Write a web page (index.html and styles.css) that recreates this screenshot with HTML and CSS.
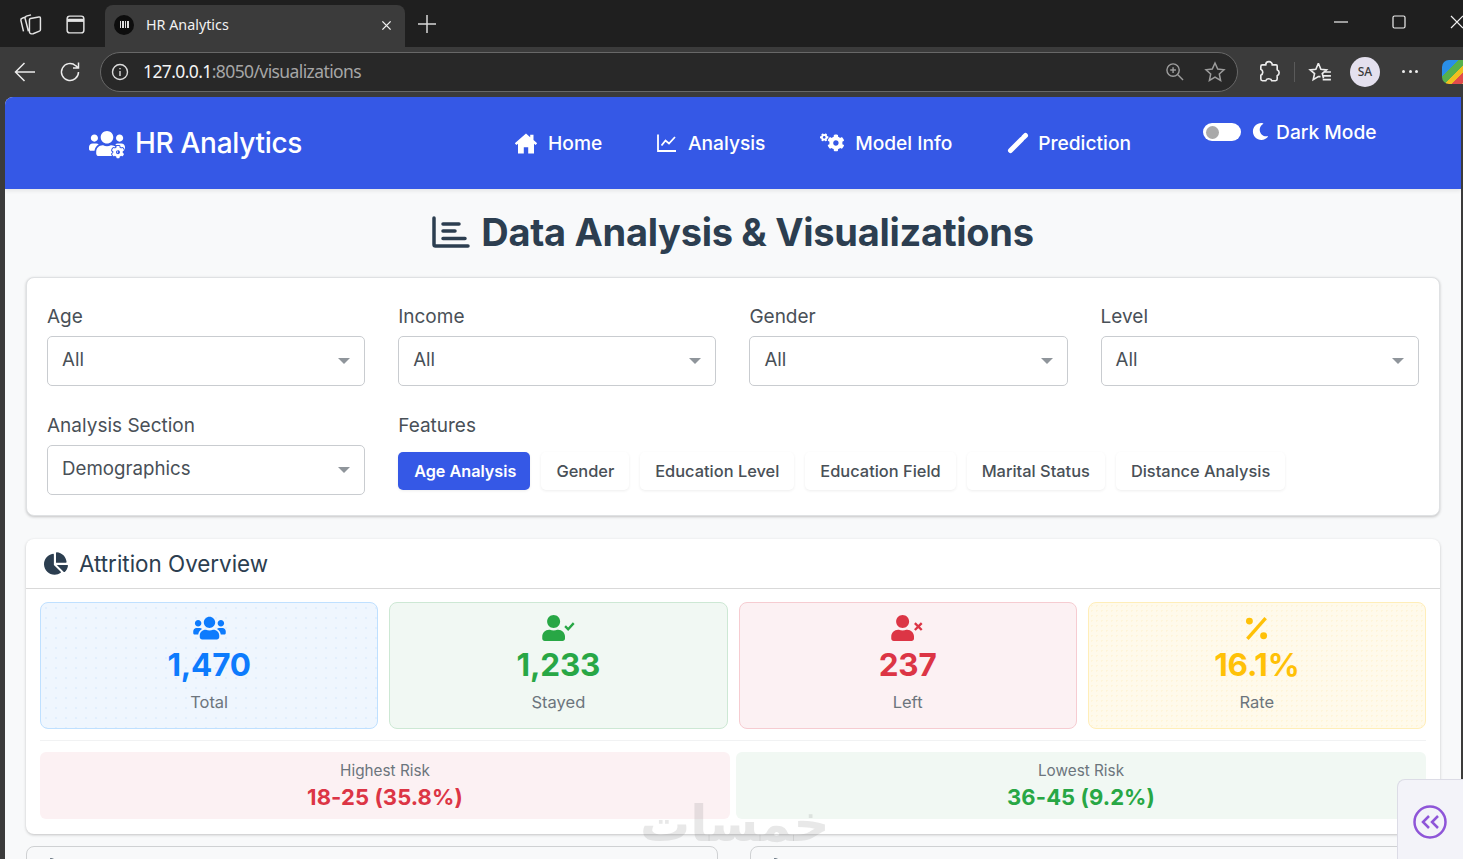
FILE: index.html
```html
<!DOCTYPE html>
<html lang="en">
<head>
<meta charset="utf-8">
<title>HR Analytics</title>
<link rel="stylesheet" href="styles.css">
</head>
<body>
<svg class="defs" width="0" height="0">
  <defs>
    <path id="p-user" d="M224 256c70.700 0 128-57.300 128-128S294.700 0 224 0 96 57.300 96 128s57.300 128 128 128zm89.600 32h-16.700c-22.200 10.200-46.900 16-72.900 16s-50.600-5.800-72.900-16h-16.700C60.200 288 0 348.200 0 422.400V464c0 26.500 21.500 48 48 48h352c26.500 0 48-21.500 48-48v-41.600c0-74.200-60.200-134.400-134.400-134.400z"/>
    <path id="p-users" d="M96 224c35.300 0 64-28.700 64-64s-28.700-64-64-64-64 28.700-64 64 28.700 64 64 64zm448 0c35.300 0 64-28.700 64-64s-28.700-64-64-64-64 28.700-64 64 28.700 64 64 64zm32 32h-64c-17.600 0-33.500 7.100-45.100 18.600 40.300 22.100 68.900 62 75.100 109.400h66c17.700 0 32-14.300 32-32v-32c0-35.300-28.700-64-64-64zm-256 0c61.900 0 112-50.100 112-112S381.900 32 320 32 208 82.100 208 144s50.100 112 112 112zm76.800 32h-8.300c-20.800 10-43.900 16-68.500 16s-47.600-6-68.500-16h-8.300C179.600 288 128 339.600 128 403.200V432c0 26.500 21.500 48 48 48h288c26.500 0 48-21.500 48-48v-28.800c0-63.600-51.600-115.200-115.200-115.200zm-223.700-13.400C161.500 263.100 145.600 256 128 256H64c-35.300 0-64 28.700-64 64v32c0 17.700 14.300 32 32 32h65.900c6.300-47.400 34.900-87.300 75.200-109.400z"/>
    <path id="p-pie" d="M527.790 288H290.500l158.030 158.030c6.040 6.040 15.980 6.530 22.190.68 38.700-36.460 65.320-85.610 73.130-140.860 1.340-9.460-6.510-17.850-16.060-17.850zm-15.830-64.800C503.720 103.740 408.260 8.280 288.800.04 279.680-.59 272 7.100 272 16.240V240h223.770c9.140 0 16.820-7.680 16.190-16.800zM224 288V50.710c0-9.550-8.390-17.400-17.840-16.060C86.990 51.490-4.100 155.600.14 280.370 4.500 408.510 114.830 513.590 243.030 511.980c50.400-.63 96.970-16.870 135.260-44.030 7.900-5.600 8.420-17.230 1.570-24.08L224 288z"/>
    <path id="p-gear" d="M386.300 286.100l33.700 16.800c10.100 5.800 14.500 18.100 10.500 29.100-8.900 24.200-26.400 46.400-42.600 65.800-7.400 8.900-20.200 11.100-30.300 5.300l-29.100-16.800c-16 13.700-34.600 24.600-54.900 31.700v33.600c0 11.600-8.300 21.600-19.700 23.600-24.600 4.200-50.400 4.400-75.900 0-11.500-2-20-11.900-20-23.600V418c-20.300-7.200-38.900-18-54.900-31.700L74 403c-10 5.800-22.900 3.600-30.300-5.300-16.200-19.400-33.300-41.600-42.200-65.700-4-10.900.4-23.200 10.500-29.100l33.300-16.800c-3.900-20.900-3.900-42.400 0-63.400L12 205.800c-10.100-5.800-14.600-18.100-10.500-29 8.900-24.200 26-46.400 42.200-65.800 7.400-8.900 20.200-11.100 30.300-5.300l29.100 16.800c16-13.700 34.600-24.600 54.900-31.700V57.100c0-11.500 8.200-21.500 19.600-23.500 24.600-4.200 50.500-4.400 76-.1 11.500 2 20 11.900 20 23.600v33.600c20.300 7.200 38.900 18 54.900 31.700l29.100-16.800c10-5.800 22.900-3.600 30.300 5.300 16.200 19.400 33.200 41.600 42.100 65.800 4 10.900.1 23.200-10 29.100l-33.700 16.800c3.900 21 3.900 42.500 0 63.500zm-117.600 21.100c59.200-77-28.700-164.900-105.700-105.700-59.200 77 28.700 164.900 105.700 105.700z"/>
  </defs>
</svg>

<header class="tabstrip">
  <div class="strip-icons">
    <svg class="chrome-icon" viewBox="0 0 22 22"><path d="M10 6.500q0-1 1-1.200l8-1.500q1.500-.2 1.500 1.200v11q0 1-1 1.300l-6 2.500q-3 .7-3.500-1.500zM7 3.500 3 5q-1.500.5-1.200 2l2.500 10.500M11.500 1.800 7 3q-1.500.5-1.200 2l3.200 12.500"/></svg>
    <svg class="chrome-icon" viewBox="0 0 22 22"><rect x="3" y="3" width="16" height="16" rx="2.500"/><path class="solid-band" d="M3 7h16"/></svg>
  </div>
  <div class="tab">
    <span class="favicon"><i></i><i></i><i></i><i></i></span>
    <span class="tab-title">HR Analytics</span>
    <svg class="tab-close" viewBox="0 0 12 12"><path d="M1.500 1.500l9 9M10.500 1.500l-9 9"/></svg>
  </div>
  <svg class="new-tab" viewBox="0 0 18 18"><path d="M9 0v18M0 9h18"/></svg>
  <div class="window-controls">
    <svg class="win-min" viewBox="0 0 14 14"><path d="M0 7h14"/></svg>
    <svg class="win-max" viewBox="0 0 14 14"><rect x="1" y="1" width="12" height="12" rx="1.500"/></svg>
    <svg class="win-close" viewBox="0 0 14 14"><path d="M1 1l12 12M13 1L1 13"/></svg>
  </div>
</header>

<div class="toolbar">
  <svg class="tool-icon back" viewBox="0 0 22 22"><path d="M21 11H1.500M10.500 2l-9 9 9 9"/></svg>
  <svg class="tool-icon reload" viewBox="0 0 22 22"><path d="M19.500 11a8.500 8.500 0 1 1-2.800-6.300L19.500 7M19.500 1.500V7H14"/></svg>
  <div class="urlbar">
    <span class="info-chip"><svg viewBox="0 0 18 18"><circle cx="9" cy="9" r="7.500"/><path d="M9 8v5M9 5v1.300"/></svg></span>
    <span class="url"><b>127.0.0.1</b>:8050/visualizations</span>
    <svg class="url-icon zoom-lens" viewBox="0 0 20 20"><circle cx="8.500" cy="8.500" r="6.500"/><path d="M13.500 13.500l5.500 5.500M8.500 5.500v6M5.500 8.500h6"/></svg>
    <svg class="url-icon url-star" viewBox="0 0 22 22"><path d="M11 2l2.700 6 6.300.7-4.700 4.300 1.300 6.500-5.600-3.300-5.600 3.300 1.300-6.500L2 8.700 8.300 8z"/></svg>
  </div>
  <svg class="tool-icon ext" viewBox="0 0 22 22"><path d="M8 4.500a3 3 0 0 1 6 0h3.500a1 1 0 0 1 1 1V9a3 3 0 0 1 0 5.500v3a1.500 1.500 0 0 1-1.500 1.500h-3.500a3 3 0 0 0-5.500 0H5a1.500 1.500 0 0 1-1.500-1.500V14a3 3 0 0 0 0-5.500V6A1.500 1.500 0 0 1 5 4.500z"/></svg>
  <span class="tool-sep"></span>
  <svg class="tool-icon fav" viewBox="0 0 22 22"><path d="M9.500 3l2.300 5.500 5.200.5-3.900 3.500 1.100 4.300M9.500 3L7.200 8.500 2 9l4 3.500L4.800 18l4.700-2.800h2M14 11h7M14 14.500h7M13.500 18H21"/></svg>
  <span class="avatar">SA</span>
  <span class="more"><i></i><i></i><i></i></span>
  <span class="copilot"></span>
</div>

<div class="page">
  <nav class="navbar">
    <a class="brand">
      <svg class="brand-icon" viewBox="0 0 640 512"><use href="#p-users"/><use class="brand-gear" href="#p-gear" transform="translate(410 285) scale(.49)"/></svg>
      HR Analytics
    </a>
    <div class="nav-links">
      <a class="nav-link">
        <svg class="ico-home" viewBox="0 0 24 21"><path d="M12 .5 .8 10.200l1.600 1.900L4 10.800V20.500h5.800v-6.300h4.400v6.300H20V10.800l1.600 1.300 1.600-1.900L19.500 7V1.800h-3.300v2.400z"/></svg>
        Home
      </a>
      <a class="nav-link">
        <svg class="ico-line" viewBox="0 0 20 20"><path d="M1 1.500V18h18"/><path d="M4.500 12.500l4-5 3.500 3 6-6.500"/></svg>
        Analysis
      </a>
      <a class="nav-link">
        <svg class="ico-gears" viewBox="0 0 640 512"><g transform="translate(640 0) scale(-1 1)"><path d="M512.100 191l-8.200 14.300c-3 5.300-9.400 7.500-15.100 5.400-11.800-4.400-22.600-10.700-32.100-18.600-4.600-3.800-5.800-10.500-2.800-15.700l8.200-14.300c-6.900-8-12.300-17.300-15.900-27.400h-16.500c-6 0-11.200-4.300-12.200-10.300-2-12-2.100-24.600 0-37.100 1-6 6.200-10.400 12.200-10.400h16.500c3.600-10.100 9-19.400 15.900-27.400l-8.200-14.300c-3-5.200-1.900-11.900 2.800-15.700 9.500-7.900 20.400-14.200 32.100-18.600 5.700-2.100 12.100.1 15.100 5.400l8.200 14.300c10.500-1.900 21.200-1.900 31.700 0L552 6.300c3-5.300 9.400-7.500 15.100-5.400 11.800 4.400 22.600 10.700 32.100 18.600 4.600 3.800 5.800 10.500 2.800 15.700l-8.200 14.300c6.900 8 12.300 17.300 15.900 27.400h16.500c6 0 11.200 4.300 12.200 10.300 2 12 2.100 24.600 0 37.100-1 6-6.200 10.400-12.200 10.400h-16.500c-3.600 10.100-9 19.400-15.900 27.400l8.200 14.300c3 5.200 1.900 11.900-2.800 15.700-9.500 7.900-20.400 14.200-32.100 18.600-5.700 2.100-12.100-.1-15.100-5.400l-8.200-14.300c-10.400 1.900-21.200 1.900-31.700 0zm-10.500-58.800c38.500 29.600 82.400-14.300 52.800-52.800-38.500-29.700-82.400 14.300-52.800 52.800z"/><use href="#p-gear"/></g></svg>
        Model Info
      </a>
      <a class="nav-link">
        <svg class="ico-pencil" viewBox="0 0 22 22"><path d="M3.500 18.500 14.500 7.500"/><path d="M16.700 5.300 18.500 3.500"/></svg>
        Prediction
      </a>
    </div>
    <div class="dark-toggle">
      <span class="switch"><i></i></span>
      <svg class="ico-moon" viewBox="0 0 512 512"><path d="M283.211 512c78.962 0 151.079-35.925 198.857-94.792 7.068-8.708-.639-21.430-11.562-19.350-124.203 23.654-238.262-71.576-238.262-196.954 0-72.222 38.662-138.635 101.498-174.394 9.686-5.512 7.250-20.197-3.756-22.230A258.156 258.156 0 0 0 283.211 0c-141.309 0-256 114.511-256 256 0 141.309 114.511 256 256 256z"/></svg>
      Dark Mode
    </div>
  </nav>

  <main class="content">
    <h1 class="page-title">
      <svg viewBox="0 0 38 32"><path d="M2 2v26.500a1.500 1.500 0 0 0 1.500 1.500H36"/><path d="M11 8h16M11 15h12M11 22.500h22"/></svg>
      Data Analysis &amp; Visualizations
    </h1>

    <section class="card filters">
      <div class="filter-grid">
        <div class="field"><label class="field-label">Age</label><div class="select">All<i class="caret"></i></div></div>
        <div class="field"><label class="field-label">Income</label><div class="select">All<i class="caret"></i></div></div>
        <div class="field"><label class="field-label">Gender</label><div class="select">All<i class="caret"></i></div></div>
        <div class="field"><label class="field-label">Level</label><div class="select">All<i class="caret"></i></div></div>
        <div class="field"><label class="field-label">Analysis Section</label><div class="select">Demographics<i class="caret"></i></div></div>
        <div class="field features">
          <label class="field-label">Features</label>
          <div class="chips">
            <span class="chip active">Age Analysis</span>
            <span class="chip">Gender</span>
            <span class="chip">Education Level</span>
            <span class="chip">Education Field</span>
            <span class="chip">Marital Status</span>
            <span class="chip">Distance Analysis</span>
          </div>
        </div>
      </div>
    </section>

    <section class="card overview">
      <div class="card-head">
        <svg viewBox="0 0 544 512"><use href="#p-pie"/></svg>
        Attrition Overview
      </div>
      <div class="card-body">
        <div class="stats">
          <div class="stat blue">
            <svg class="stat-icon" viewBox="0 0 640 512"><use href="#p-users"/></svg>
            <div class="stat-value">1,470</div>
            <div class="stat-label">Total</div>
          </div>
          <div class="stat green">
            <svg class="stat-icon" viewBox="0 0 640 512"><use href="#p-user"/><path class="mark" d="M450 220l60 60 110-120"/></svg>
            <div class="stat-value">1,233</div>
            <div class="stat-label">Stayed</div>
          </div>
          <div class="stat red">
            <svg class="stat-icon" viewBox="0 0 640 512"><use href="#p-user"/><path class="mark" d="M465 160l135 135M600 160L465 295"/></svg>
            <div class="stat-value">237</div>
            <div class="stat-label">Left</div>
          </div>
          <div class="stat yellow">
            <svg class="stat-icon" viewBox="0 0 640 512"><path class="mark" d="M140 470 500 60"/><circle cx="180" cy="120" r="68"/><circle cx="460" cy="410" r="68"/></svg>
            <div class="stat-value">16.1%</div>
            <div class="stat-label">Rate</div>
          </div>
        </div>
        <hr class="divider">
        <div class="risks">
          <div class="risk risk-high">
            <div class="risk-label">Highest Risk</div>
            <div class="risk-value">18-25 (35.8%)</div>
          </div>
          <div class="risk risk-low">
            <div class="risk-label">Lowest Risk</div>
            <div class="risk-value">36-45 (9.2%)</div>
          </div>
        </div>
      </div>
    </section>

    <div class="chart-row">
      <section class="chart-card"><div class="chart-head"><svg viewBox="0 0 544 512"><use href="#p-pie"/></svg>Age Distribution by Attrition</div></section>
      <section class="chart-card"><div class="chart-head"><svg viewBox="0 0 544 512"><use href="#p-pie"/></svg>Attrition Rate by Age</div></section>
    </div>
  </main>
</div>

<div class="watermark">خمسات</div>
<aside class="side-tab">
  <svg viewBox="0 0 34 34"><circle cx="17" cy="17" r="15.500"/><path d="M16 11l-6 6 6 6M25 11l-6 6 6 6"/></svg>
</aside>
</body>
</html>
```
FILE: styles.css
```css
* { box-sizing: border-box; }
html, body { margin: 0; height: 859px; overflow: hidden; }
body { background: #3b3b3b; font-family: Inter, "Noto Sans", sans-serif; color: #495057; position: relative; }
.defs { position: absolute; }
i { font-style: normal; display: block; }

/* Browser chrome */
.tabstrip { height: 47px; background: #1f1f1f; display: flex; align-items: flex-end; font-family: "Noto Sans", sans-serif; }
.strip-icons { display: flex; gap: 22px; width: 105px; padding: 0 0 11px 19px; }
.chrome-icon { width: 23px; height: 23px; fill: none; stroke: #e4e4e4; stroke-width: 1.400; flex: none; }
.solid-band { stroke-width: 3; }
.tab { width: 300px; height: 42px; background: #3b3b3b; border-radius: 8px 8px 0 0; display: flex; align-items: center; padding: 0 13px 3px 9px; color: #f2f2f2; font-size: 14.300px; }
.favicon { width: 20px; height: 20px; border-radius: 50%; background: #0d0d0d; display: flex; align-items: center; justify-content: center; gap: 1px; }
.favicon i { width: 1.500px; height: 7px; background: #ddd; }
.tab-title { margin-left: 12px; flex: 1; }
.tab-close { width: 11px; height: 11px; fill: none; stroke: #f0f0f0; stroke-width: 1.500; margin-top: 2px; }
.new-tab { width: 18px; height: 18px; margin: 0 0 14px 13px; fill: none; stroke: #d8d8d8; stroke-width: 1.500; }
.window-controls { margin-left: auto; display: flex; align-items: center; align-self: stretch; padding-bottom: 3px; }
.window-controls svg { fill: none; stroke: #f0f0f0; stroke-width: 1.200; }
.win-min { width: 14px; height: 14px; margin-right: 44px; }
.win-max { width: 14px; height: 14px; margin-right: 44px; }
.win-close { width: 14px; height: 14px; margin-right: -1px; }

.toolbar { height: 50px; background: #3b3b3b; display: flex; align-items: center; padding-bottom: 1px; font-family: "Noto Sans", sans-serif; }
.tool-icon { fill: none; stroke: #ececec; stroke-width: 1.500; flex: none; }
.back { width: 22px; height: 22px; margin-left: 14px; }
.reload { width: 22px; height: 22px; margin-left: 23px; }
.urlbar { flex: none; width: 1138px; height: 40px; margin-left: 19px; background: #282828; border: 1.500px solid #686868; border-radius: 20px; display: flex; align-items: center; padding: 0 11px 0 8px; }
.info-chip { width: 22px; height: 22px; display: flex; }
.info-chip svg { width: 22px; height: 22px; padding: 2px; fill: none; stroke: #dcdcdc; stroke-width: 1.400; }
.url { margin-left: 12px; padding-bottom: 2px; font-size: 17.500px; letter-spacing: -.6px; color: #a6a6a6; flex: 1; }
.url b { font-weight: 400; color: #f4f4f4; }
.url-icon { fill: none; stroke: #9c9c9c; stroke-width: 1.500; flex: none; }
.zoom-lens { width: 19px; height: 19px; margin-right: 20px; }
.url-star { width: 22px; height: 22px; }
.ext { width: 24px; height: 24px; margin-left: 19px; }
.tool-sep { flex: none; width: 1px; height: 20px; background: #5a5a5a; margin-left: 13px; }
.fav { width: 24px; height: 24px; margin-left: 13px; }
.avatar { flex: none; width: 30px; height: 30px; margin-left: 18px; border-radius: 50%; background: #e4e0ee; color: #3b3b3b; font-size: 12px; font-weight: 500; display: flex; align-items: center; justify-content: center; }
.more { flex: none; display: flex; gap: 3.500px; margin-left: 22px; }
.more i { width: 3px; height: 3px; border-radius: 50%; background: #eee; }
.copilot { width: 30px; height: 24px; margin-left: 24px; flex: none; border-radius: 7px 0 0 7px; background: linear-gradient(135deg, #2a8fe8 0 30%, #57b04c 30% 50%, #f0c020 50% 62%, #e24b4b 62% 80%, #e49a60 80%); }

/* Page */
.page { margin-left: 5px; width: 1456px; height: 762px; background: #f8f9fa; border-radius: 8px 0 0 0; overflow: hidden; }
.navbar { height: 92px; background: #3558e6; color: #fff; display: flex; align-items: center; padding-left: 84px; box-shadow: 0 2px 4px rgba(0, 0, 0, .08); position: relative; }
.brand { display: flex; align-items: center; font-size: 28px; font-weight: 500; letter-spacing: -.3px; width: 425px; }
.brand-icon { width: 36px; height: 29px; margin-right: 10px; fill: #fff; overflow: visible; flex: none; }
.brand-gear { stroke: #3558e6; stroke-width: 70px; paint-order: stroke; }
.nav-links { display: flex; gap: 54.700px; }
.nav-link { display: flex; align-items: center; font-size: 19.200px; font-weight: 500; }
.nav-link svg { fill: #fff; flex: none; }
.ico-home { width: 24px; height: 21px; margin-right: 10px; }
.ico-line { width: 20px; height: 20px; margin-right: 11px; fill: none !important; stroke: #fff; stroke-width: 1.800; }
.ico-gears { width: 24px; height: 20px; margin-right: 11px; }
.ico-pencil { width: 22px; height: 22px; margin-right: 9px; fill: none !important; stroke: #fff; stroke-width: 5; stroke-linecap: round; }
.dark-toggle { display: flex; align-items: center; margin-left: 72px; padding-bottom: 22px; font-size: 19.200px; font-weight: 500; }
.switch { width: 38px; height: 18px; border-radius: 9px; background: #fff; display: flex; align-items: center; padding-left: 3px; }
.switch i { width: 13px; height: 13px; border-radius: 50%; background: #a9a9a9; }
.ico-moon { width: 17px; height: 17px; margin: -1px 7px 0 11px; fill: #fff; }

.content { padding: 20px 21px 0; }
.page-title { margin: 0 0 22px; height: 46px; display: flex; align-items: center; justify-content: center; gap: 11px; font-size: 38px; line-height: 46px; font-weight: 700; color: #2c3e50; letter-spacing: -.3px; }
.page-title svg { width: 38px; height: 32px; fill: none; stroke: #2c3e50; stroke-width: 3.500; stroke-linecap: round; flex: none; }

.card { background: #fff; border-radius: 8px; box-shadow: 0 1px 3px rgba(0, 0, 0, .22); }
.filters { height: 239px; padding: 27px 20px 0; border: 1px solid #dfe1e3; }
.filter-grid { display: grid; grid-template-columns: repeat(4, 318.200px); column-gap: 33px; row-gap: 28px; }
.field-label { display: block; height: 24px; margin-bottom: 7px; font-size: 19px; line-height: 24px; color: #495057; }
.select { height: 50px; border: 1px solid #c9ccd0; border-radius: 5px; display: flex; align-items: center; padding: 0 14px 3px; font-size: 18.700px; color: #495057; background: #fff; }
.caret { margin: 3px 0 0 auto; width: 0; height: 0; border-left: 6px solid transparent; border-right: 6px solid transparent; border-top: 6px solid #8f959b; }
.features { grid-column: span 3; }
.chips { display: flex; gap: 11px; margin-top: 14px; }
.chip { height: 38px; padding: 0 15px; border-radius: 5px; background: #fff; display: flex; align-items: center; font-size: 16.400px; font-weight: 500; color: #495057; box-shadow: 0 1px 3px rgba(0, 0, 0, .07); white-space: nowrap; }
.chip.active { background: #3558e6; color: #fff; font-weight: 600; font-size: 16.200px; padding: 0 14px 0 16px; }

.overview { margin-top: 23px; height: 295px; }
.card-head { height: 50px; padding-left: 18px; border-bottom: 1px solid #d9d9d9; display: flex; align-items: center; gap: 11px; font-size: 22.400px; font-weight: 400; color: #2c3e50; }
.card-head svg { width: 24px; height: 23px; fill: #2c3e50; }
.card-body { padding: 13px 14px 0; }
.stats { display: grid; grid-template-columns: repeat(4, 1fr); gap: 11px; }
.stat { height: 127px; border: 1px solid; border-radius: 8px; padding-top: 12px; display: flex; flex-direction: column; align-items: center; background-size: 10px 10px; }
.stat-icon { width: 33px; height: 26px; display: block; overflow: visible; }
.stat-value { font-size: 31.500px; line-height: 38px; font-weight: 700; margin-top: 5px; letter-spacing: -.2px; }
.stat-label { margin-top: 7px; font-size: 16.500px; line-height: 22px; color: #6c757d; }
.mark { fill: none; stroke: currentColor; stroke-width: 54; }
.blue { color: #0d7bfd; background-color: #eff6fe; border-color: #bfe0ff; background-image: radial-gradient(circle, rgba(13, 123, 253, .06) 1px, transparent 1px); }
.green { color: #28a745; background-color: #f1f8f3; border-color: #cde8d4; }
.red { color: #dc3545; background-color: #fcf1f3; border-color: #f6ccd1; }
.yellow { color: #ffc107; background-color: #fffaeb; border-color: #ffeeb9; background-image: radial-gradient(circle, rgba(255, 193, 7, .07) 1px, transparent 1px); background-size: 5px 5px; }
.stat svg { fill: currentColor; }
.green .mark { stroke-width: 46; }
.red .mark { stroke-width: 46; }
.yellow .mark { stroke-width: 66; }
.divider { border: 0; border-top: 1px solid #f1f2f3; margin: 11px 0; }
.risks { display: flex; gap: 6px; }
.risk { flex: 0 0 auto; height: 67px; border-radius: 6px; text-align: center; padding-top: 9px; }
.risk-high { width: 690px; background: #fcf1f3; color: #dc3545; }
.risk-low { width: 690px; background: #f1f8f3; color: #28a745; }
.risk-label { font-size: 15.300px; line-height: 20px; color: #6c757d; }
.risk-value { font-size: 22px; line-height: 30px; font-weight: 700; margin-top: 1px; letter-spacing: .1px; }

.chart-row { display: grid; grid-template-columns: 692px 692px; column-gap: 32px; margin-top: 12px; }
.chart-card { height: 100px; background: #f8f9fa; border: 1px solid #cfd1d3; border-radius: 8px; }
.chart-head { padding: 9px 12px; display: flex; align-items: center; gap: 10px; font-size: 20px; color: #2c3e50; }
.chart-head svg { width: 22px; height: 21px; fill: #2c3e50; }

/* Overlays */
.watermark { position: absolute; left: 640px; top: 794px; width: 182px; text-align: center; font-family: "DejaVu Sans", sans-serif; font-size: 50px; line-height: 60px; font-weight: 700; color: rgba(120, 120, 120, .17); pointer-events: none; }
.side-tab { position: absolute; right: 0; bottom: 0; width: 66px; height: 80px; background: #f3f3f9; border: 1px solid #dcdce6; border-right: 0; border-bottom: 0; border-radius: 8px 0 0 0; padding: 25px 0 0 15px; }
.side-tab svg { width: 34px; height: 34px; display: block; fill: none; stroke: #8e55d8; stroke-width: 2.500; }
```
